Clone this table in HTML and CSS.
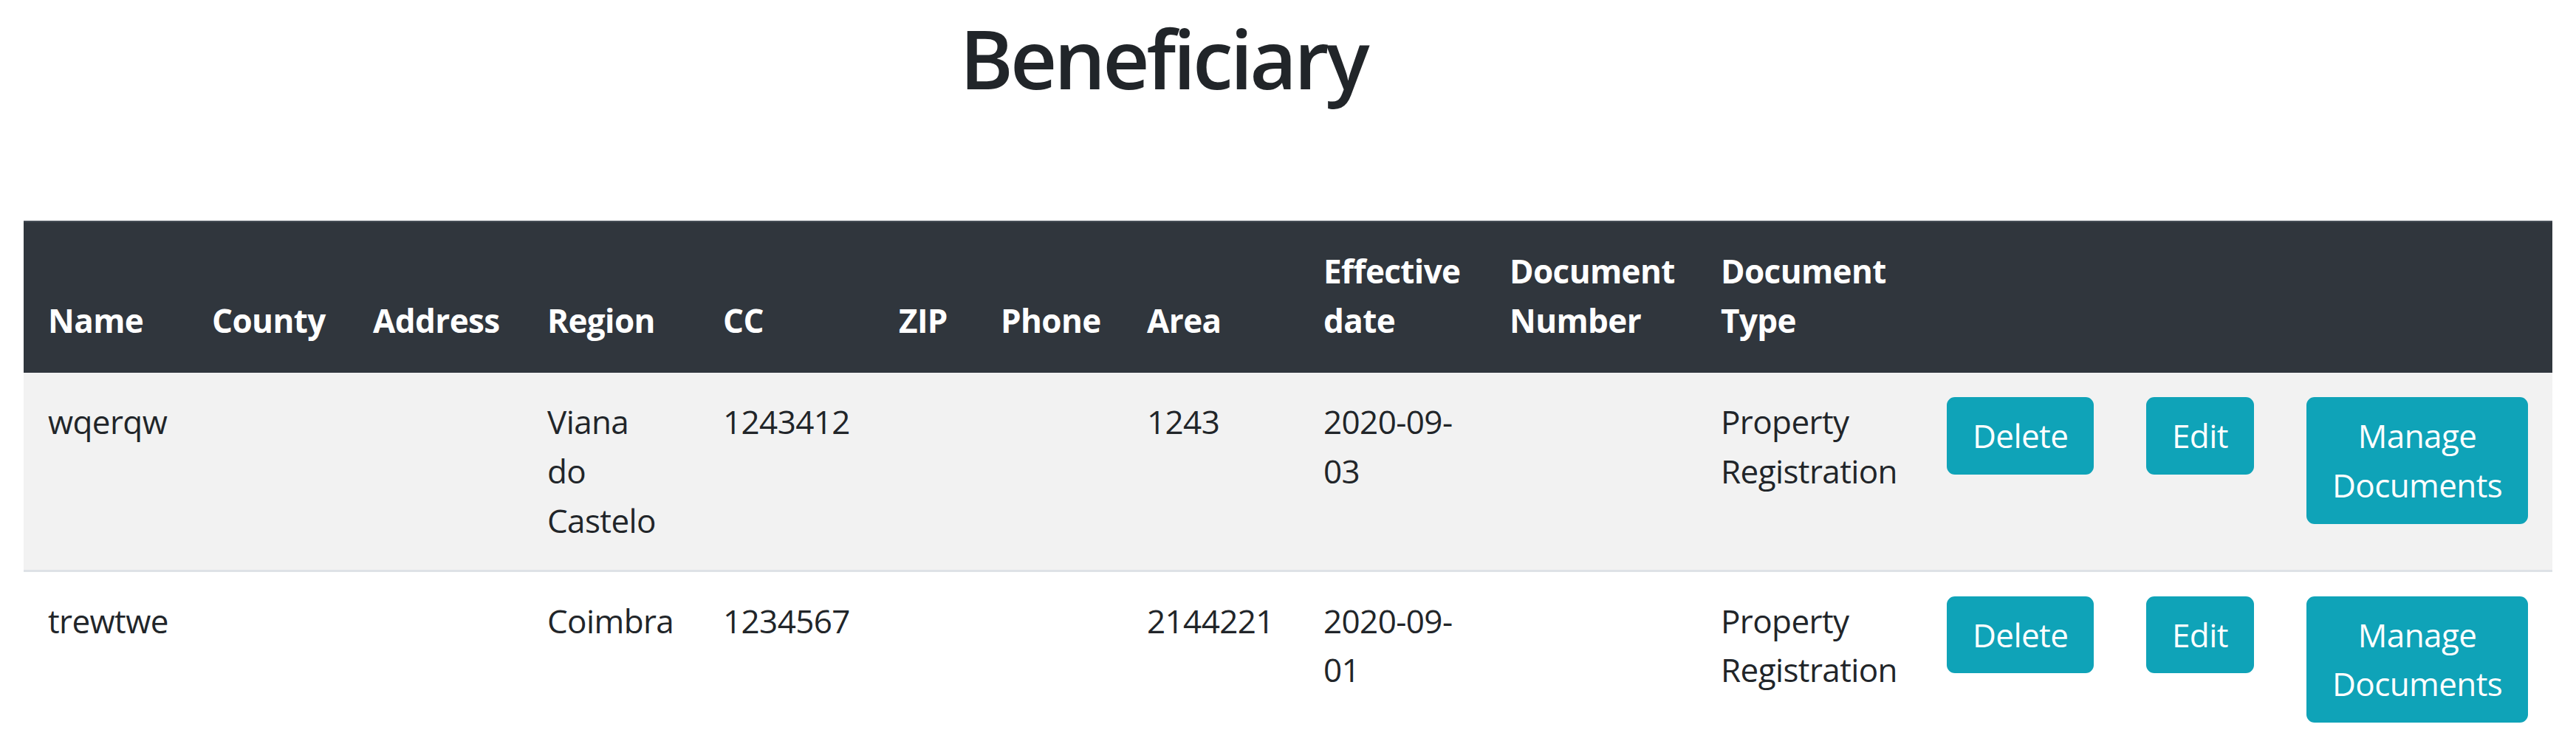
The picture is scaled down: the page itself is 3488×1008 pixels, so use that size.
FILE: index.html
```html
<!DOCTYPE html>
<html lang="en">
<head>
<meta charset="utf-8">
<title>Beneficiary</title>
<link rel="stylesheet" href="styles.css">
</head>
<body>
<main class="page">
  <h1 class="title">Beneficiary</h1>
  <table class="grid">
    <colgroup>
      <col class="c-name"><col class="c-county"><col class="c-address"><col class="c-region">
      <col class="c-cc"><col class="c-zip"><col class="c-phone"><col class="c-area">
      <col class="c-date"><col class="c-docnum"><col class="c-doctype">
      <col class="c-del"><col class="c-edit"><col class="c-manage">
    </colgroup>
    <thead>
      <tr>
        <th>Name</th>
        <th>County</th>
        <th>Address</th>
        <th>Region</th>
        <th>CC</th>
        <th>ZIP</th>
        <th>Phone</th>
        <th>Area</th>
        <th>Effective date</th>
        <th>Document Number</th>
        <th>Document Type</th>
        <th></th>
        <th></th>
        <th></th>
      </tr>
    </thead>
    <tbody>
      <tr class="striped">
        <td>wqerqw</td>
        <td></td>
        <td></td>
        <td>Viana do Castelo</td>
        <td>1243412</td>
        <td></td>
        <td></td>
        <td>1243</td>
        <td>2020-09-<wbr>03</td>
        <td></td>
        <td>Property Registration</td>
        <td><button class="btn">Delete</button></td>
        <td><button class="btn">Edit</button></td>
        <td><button class="btn">Manage Documents</button></td>
      </tr>
      <tr>
        <td>trewtwe</td>
        <td></td>
        <td></td>
        <td>Coimbra</td>
        <td>1234567</td>
        <td></td>
        <td></td>
        <td>2144221</td>
        <td>2020-09-<wbr>01</td>
        <td></td>
        <td>Property Registration</td>
        <td><button class="btn">Delete</button></td>
        <td><button class="btn">Edit</button></td>
        <td><button class="btn">Manage Documents</button></td>
      </tr>
    </tbody>
  </table>
</main>
</body>
</html>
```
FILE: styles.css
```css
html, body {
  margin: 0;
  padding: 0;
  background: #ffffff;
}

body {
  font-family: "Open Sans", "Noto Sans", "Liberation Sans", sans-serif;
  color: #212529;
  font-size: 44px;
  line-height: 66.7px;
  letter-spacing: -0.6px;
}

.page {
  padding: 0 32px;
}

.title {
  margin: 12px 0 0 0;
  padding-right: 338px;
  height: 287px;
  box-sizing: border-box;
  text-align: center;
  font-size: 110px;
  line-height: 133px;
  font-weight: 600;
  letter-spacing: -4px;
  color: #212529;
}

.grid {
  width: 100%;
  table-layout: fixed;
  border-collapse: collapse;
}

.c-name { width: 222px; }
.c-county { width: 218px; }
.c-address { width: 236px; }
.c-region { width: 238px; }
.c-cc { width: 238px; }
.c-zip { width: 138px; }
.c-phone { width: 198px; }
.c-area { width: 239px; }
.c-date { width: 252px; }
.c-docnum { width: 286px; }
.c-doctype { width: 306px; }
.c-del { width: 270px; }
.c-edit { width: 217px; }
.c-manage { width: 366px; }

.grid th {
  background: #30363d;
  color: #ffffff;
  font-weight: 700;
  text-align: left;
  vertical-align: bottom;
  padding: 33px;
  border-top: 2px solid #454d55;
  border-bottom: 5px solid #30363d;
}

.grid td {
  vertical-align: top;
  padding: 33px;
  border-top: 3px solid #dee2e6;
}

.grid tr.striped td {
  background: #f2f2f2;
}

.btn {
  display: inline-block;
  font-family: inherit;
  font-size: 44px;
  line-height: 66.7px;
  letter-spacing: -0.6px;
  color: #ffffff;
  background: #0fa3b8;
  border: 3px solid #0fa3b8;
  border-radius: 11px;
  padding: 16px 32px;
  margin: 0;
  text-align: center;
  cursor: pointer;
}
```
